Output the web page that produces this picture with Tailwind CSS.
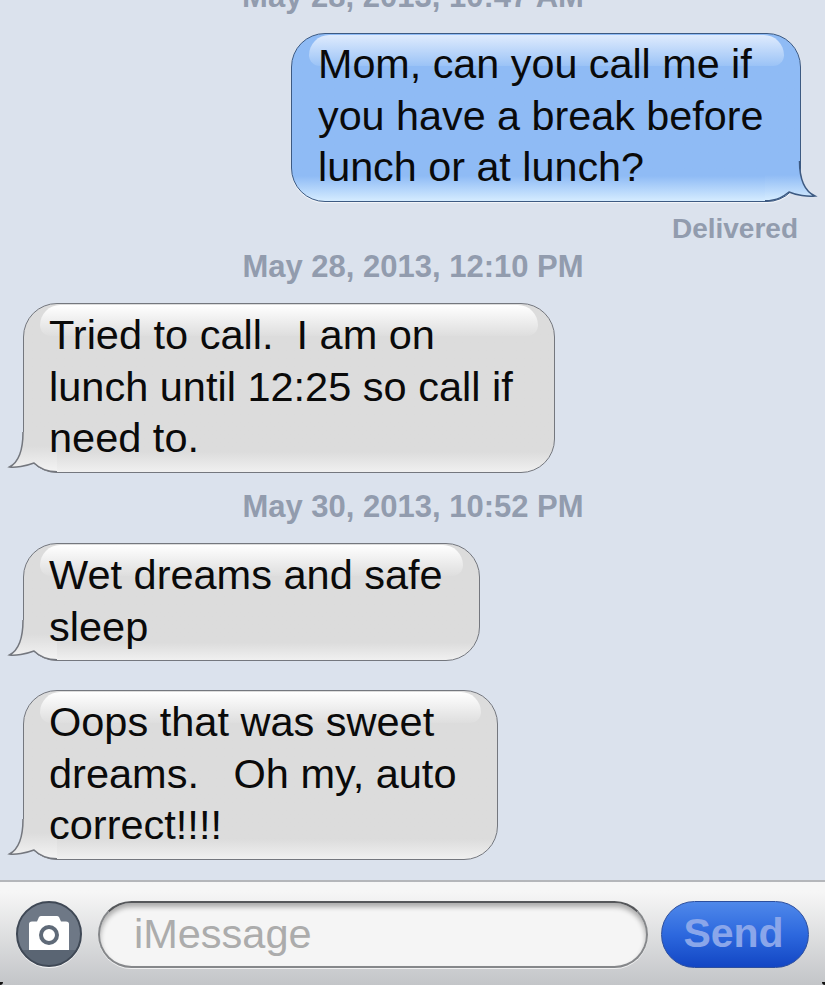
<!DOCTYPE html>
<html lang="en">
<head>
  <meta charset="UTF-8" />
  <title>Messages</title>
  <script src="https://cdn.jsdelivr.net/npm/@tailwindcss/browser@4"></script>
</head>
<body class="bg-[#dbe2ed] font-['Liberation_Sans',Arial,sans-serif] text-[#0a0a0a] overflow-hidden">
  <div class="relative h-[985px] w-[825px] flex flex-col overflow-hidden">
    <!-- Conversation -->
    <main class="flex-1 flex flex-col">
      <p class="h-[33px] -mt-[20px] mb-[20px] text-center font-bold text-[31px] leading-[33px] text-[#929cae] pl-[1px]">May 28, 2013, 10:47 AM</p>

      <!-- Sent -->
      <div class="relative self-end mr-[24px] w-[510px] h-[169px] rounded-[34px] border-[1.5px] border-[#3d5a82] bg-linear-to-b from-[#8fbbf5] from-85% to-[#d5ecff] shadow-[0_1px_1px_rgba(255,255,255,0.7)]">
        <div class="absolute top-[1px] left-[17px] right-[16px] h-[31px] rounded-t-[26px] rounded-b-[14px] bg-linear-to-b from-[#dfebfd] to-[#9bc3f6]"></div>
        <svg class="absolute left-[468px] top-[127px]" width="60" height="42" viewBox="0 0 60 42">
          <defs>
            <linearGradient id="tailBlue" gradientUnits="userSpaceOnUse" x1="0" y1="14" x2="0" y2="39">
              <stop offset="0" stop-color="#8fbbf5" />
              <stop offset="1" stop-color="#d5ecff" />
            </linearGradient>
          </defs>
          <path d="M39.5 0 C39.5 18 44 30 55 35 C48 36 36 34 29 31 C24 35 18 39.75 5 39.75 L5 0 Z" fill="url(#tailBlue)" />
          <path d="M39.5 0 C39.5 18 44 30 55 35 C48 36 36 34 29 31 C24 35 18 39.75 5 39.75" fill="none" stroke="#3d5a82" stroke-width="1.5" />
        </svg>
        <p class="relative pl-[26px] pt-[5px] text-[41.3px] leading-[51.5px] whitespace-pre">Mom, can you call me if
you have a break before
lunch or at lunch?</p>
      </div>
      <p class="mr-[27px] mt-[11px] text-right font-bold text-[28px] leading-[32px] text-[#929cae]">Delivered</p>
      <p class="mt-[4px] h-[36px] text-center font-bold text-[31px] leading-[36px] text-[#929cae] pl-[1px]">May 28, 2013, 12:10 PM</p>

      <!-- Received -->
      <div class="relative mt-[18px] ml-[23px] w-[532px] h-[170px] rounded-[34px] border-[1.5px] border-[#74777e] bg-linear-to-b from-[#dcdcdc] from-88% to-[#f0f0f0]">
        <div class="absolute top-[1px] left-[16px] right-[16px] h-[31px] rounded-t-[26px] rounded-b-[14px] bg-linear-to-b from-white to-[#dedede]"></div>
        <svg class="absolute -left-[22px] top-[128px] -scale-x-100" width="60" height="42" viewBox="0 0 60 42">
          <defs>
            <linearGradient id="tailGray" gradientUnits="userSpaceOnUse" x1="0" y1="14" x2="0" y2="39">
              <stop offset="0" stop-color="#dcdcdc" />
              <stop offset="1" stop-color="#f3f3f3" />
            </linearGradient>
          </defs>
          <path d="M39 0 C39 18 43 30 52.5 35 C47 36 36 34 28 31 C24 35 18 39.75 5 39.75 L5 0 Z" fill="url(#tailGray)" />
          <path d="M39 0 C39 18 43 30 52.5 35 C47 36 36 34 28 31 C24 35 18 39.75 5 39.75" fill="none" stroke="#74777e" stroke-width="1.5" />
        </svg>
        <p class="relative pl-[25px] pt-[5px] text-[41.5px] leading-[51.5px] whitespace-pre">Tried to call.  I am on
lunch until 12:25 so call if
need to.</p>
      </div>
      <p class="mt-[16px] h-[36px] text-center font-bold text-[31px] leading-[36px] text-[#929cae] pl-[1px]">May 30, 2013, 10:52 PM</p>

      <div class="relative mt-[18px] ml-[23px] w-[457px] h-[118px] rounded-[34px] border-[1.5px] border-[#74777e] bg-linear-to-b from-[#dcdcdc] from-85% to-[#f0f0f0]">
        <div class="absolute top-[1px] left-[16px] right-[16px] h-[31px] rounded-t-[26px] rounded-b-[14px] bg-linear-to-b from-white to-[#dedede]"></div>
        <svg class="absolute -left-[22px] top-[76px] -scale-x-100" width="60" height="42" viewBox="0 0 60 42">
          <path d="M39 0 C39 18 43 30 52.5 35 C47 36 36 34 28 31 C24 35 18 39.75 5 39.75 L5 0 Z" fill="url(#tailGray)" />
          <path d="M39 0 C39 18 43 30 52.5 35 C47 36 36 34 28 31 C24 35 18 39.75 5 39.75" fill="none" stroke="#74777e" stroke-width="1.5" />
        </svg>
        <p class="relative pl-[25px] pt-[5px] text-[41.5px] leading-[51.5px] whitespace-pre">Wet dreams and safe
sleep</p>
      </div>

      <div class="relative mt-[29px] ml-[23px] w-[475px] h-[170px] rounded-[34px] border-[1.5px] border-[#74777e] bg-linear-to-b from-[#dcdcdc] from-88% to-[#f0f0f0]">
        <div class="absolute top-[1px] left-[16px] right-[16px] h-[31px] rounded-t-[26px] rounded-b-[14px] bg-linear-to-b from-white to-[#dedede]"></div>
        <svg class="absolute -left-[22px] top-[128px] -scale-x-100" width="60" height="42" viewBox="0 0 60 42">
          <path d="M39 0 C39 18 43 30 52.5 35 C47 36 36 34 28 31 C24 35 18 39.75 5 39.75 L5 0 Z" fill="url(#tailGray)" />
          <path d="M39 0 C39 18 43 30 52.5 35 C47 36 36 34 28 31 C24 35 18 39.75 5 39.75" fill="none" stroke="#74777e" stroke-width="1.5" />
        </svg>
        <p class="relative pl-[25px] pt-[5px] text-[41.5px] leading-[51.5px] whitespace-pre">Oops that was sweet
dreams.   Oh my, auto
correct!!!!</p>
      </div>
    </main>

    <!-- Input bar -->
    <footer class="h-[105px] shrink-0 border-t-[2px] border-[#b4b6ba] bg-linear-to-b from-[#f6f6f6] from-10% to-[#c3c5c8] flex items-center pl-[16px] pr-[16px] pt-[1px]">
      <div class="w-[66px] h-[66px] rounded-full border-[2px] border-[#3f4855] shadow-[0_1px_0_rgba(255,255,255,0.8)] bg-linear-to-b from-[#6e7886] from-75% to-[#5a6573] to-75% flex items-center justify-center shrink-0">
        <svg class="mb-[3px]" width="42" height="36" viewBox="0 0 42 36">
          <path d="M1 9 Q1 6.5 4 6.5 L9 6.5 L11 2 Q12 1 13 1 L29 1 Q30 1 31 2 L33 6.5 L38 6.5 Q41 6.5 41 9 L41 35 L1 35 Z" fill="#fff" />
          <circle cx="21" cy="20" r="8" fill="none" stroke="#5f6a78" stroke-width="4" />
        </svg>
      </div>
      <div class="ml-[16px] w-[550px] h-[67px] rounded-[34px] border-[2px] border-[#85878a] border-t-[#55575a] bg-[#f5f5f5] shadow-[inset_0_4px_5px_rgba(0,0,0,0.3),0_1px_0_rgba(255,255,255,0.7)] flex items-center pl-[34px] text-[41.5px] text-[#acacac] shrink-0">iMessage</div>
      <div class="ml-[13px] w-[148px] h-[67px] rounded-[34px] border border-[#2d4f9e] bg-linear-to-b from-[#4f88ea] from-0% via-[#2d68de] via-50% to-[#1346c4] flex items-center justify-center font-bold text-[41px] text-[#8aa6ea] pr-[3px] shrink-0">Send</div>
    </footer>

    <!-- Screen corners -->
    <div class="absolute bottom-0 left-0 w-[3px] h-[3px] bg-[#111] rounded-br-full"></div>
    <div class="absolute bottom-0 right-0 w-[3px] h-[3px] bg-[#111] rounded-bl-full"></div>
  </div>
</body>
</html>
